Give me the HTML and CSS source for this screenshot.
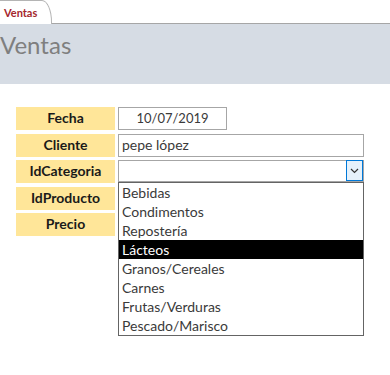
FILE: index.html
```html
<!DOCTYPE html>
<html lang="es">
<head>
  <meta charset="UTF-8">
  <meta name="viewport" content="width=device-width, initial-scale=1.0">
  <title>Ventas</title>
  <link rel="stylesheet" href="styles.css">
</head>
<body>
  <div class="tabs">
    <div class="tab">Ventas</div>
  </div>
  <div class="header">
    <h1>Ventas</h1>
  </div>

  <div class="form">
    <div class="label">Fecha</div>
    <div class="field"><div class="input date">10/07/2019</div></div>

    <div class="label">Cliente</div>
    <div class="field"><div class="input">pepe lópez</div></div>

    <div class="label">IdCategoria</div>
    <div class="field combo">
      <div class="input"></div>
      <div class="combo-btn">
        <svg width="9" height="6" viewBox="0 0 9 6"><path d="M1 1 L4.5 4.5 L8 1" fill="none" stroke="#333" stroke-width="1.2"/></svg>
      </div>
      <ul class="list">
        <li>Bebidas</li>
        <li>Condimentos</li>
        <li>Repostería</li>
        <li class="selected">Lácteos</li>
        <li>Granos/Cereales</li>
        <li>Carnes</li>
        <li>Frutas/Verduras</li>
        <li>Pescado/Marisco</li>
      </ul>
    </div>

    <div class="label">IdProducto</div>
    <div class="field"></div>

    <div class="label">Precio</div>
    <div class="field"></div>
  </div>
</body>
</html>
```

FILE: styles.css
```css
* {
  box-sizing: border-box;
}
html, body {
  min-height: 375px;
}
body {
  margin: 0;
  font-family: Lato, 'Open Sans', sans-serif;
  background: #fff;
  color: #333;
}
.tabs {
  height: 24px;
  border-bottom: 1px solid #a6a6a6;
  position: relative;
}
.tab {
  position: absolute;
  left: 0;
  top: 0;
  width: 52px;
  height: 24px;
  padding: 5px 0 0 4px;
  background: #fff;
  border: 1px solid #b4b4b4;
  border-left: none;
  border-bottom: none;
  border-top-right-radius: 10px 22px;
  font-size: 11px;
  font-weight: bold;
  color: #a4262c;
}
.header {
  height: 60px;
  background: #d6dce4;
}
.header h1 {
  margin: 0;
  padding-top: 6px;
  font-size: 24px;
  font-weight: normal;
  color: #7f7f7f;
  line-height: 30px;
}
.form {
  display: grid;
  grid-template-columns: 99px 246px;
  column-gap: 3px;
  row-gap: 3.5px;
  grid-auto-rows: 23px;
  margin-top: 23px;
  padding-left: 16px;
}
.label {
  background: #ffe699;
  font-size: 14px;
  font-weight: bold;
  color: #1a1a1a;
  text-align: center;
  line-height: 21px;
}
.field {
  position: relative;
}
.input {
  height: 23px;
  border: 1px solid #a6a6a6;
  font-size: 14px;
  line-height: 20px;
  padding-left: 3px;
  color: #3a3a3a;
}
.input.date {
  width: 109px;
  font-size: 13px;
  text-align: center;
  padding-left: 0;
}
.combo .input {
  height: 22px;
}
.combo-btn {
  position: absolute;
  right: 1px;
  top: 0;
  width: 17px;
  height: 21px;
  border: 1px solid #0078d7;
  background: #e5f1fb;
  display: flex;
  align-items: center;
  justify-content: center;
}
.list {
  position: absolute;
  left: 0;
  top: 22px;
  width: 246px;
  margin: 0;
  padding: 0;
  list-style: none;
  background: #fff;
  border: 1px solid #646464;
  z-index: 2;
}
.list li {
  height: 19px;
  line-height: 19px;
  padding-left: 3px;
  font-size: 14px;
  color: #3a3a3a;
}
.list li.selected {
  background: #000;
  color: #fff;
}
```
